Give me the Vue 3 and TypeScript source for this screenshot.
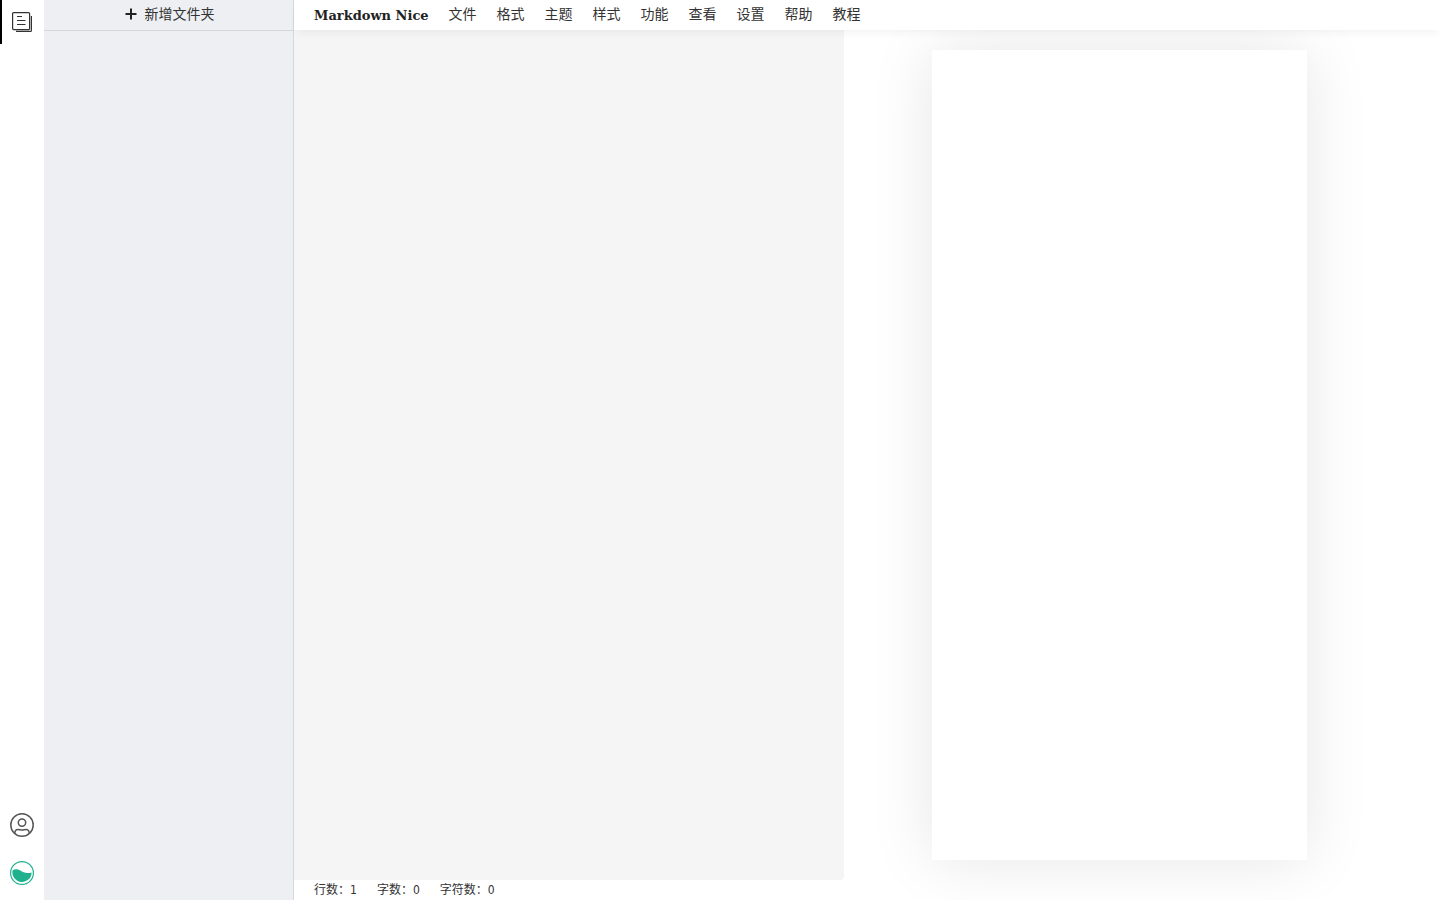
<script setup lang="ts">
import { computed, ref } from 'vue'

const menus: string[] = ['文件', '格式', '主题', '样式', '功能', '查看', '设置', '帮助', '教程']
const content = ref<string>('')

const stats = computed(() => [
  { label: '行数', value: content.value.split('\n').length },
  { label: '字数', value: content.value.replace(/\s/g, '').length },
  { label: '字符数', value: content.value.length },
])
</script>

<template>
  <div class="app">
    <nav class="rail" aria-label="侧边栏">
      <button class="rail-btn active" type="button" aria-label="文章">
        <svg width="20" height="20" viewBox="0 0 20 20" fill="none" stroke="#333" stroke-width="1.200">
          <rect x=".6" y=".6" width="17" height="17" rx="1" />
          <path d="M19.400 4v14.400a1 1 0 0 1-1 1H4M5 4.500h5M5 8.500h8.500M5 12.500h8.500" />
        </svg>
      </button>
      <div class="rail-bottom">
        <button class="rail-btn" type="button" aria-label="用户">
          <svg width="24" height="24" viewBox="0 0 24 24" fill="none" stroke="#555" stroke-width="1.500">
            <circle cx="12" cy="12" r="11.200" />
            <circle cx="12" cy="9.600" r="3.700" />
            <path d="M4.800 20.400c0-2.700 1.200-4 3.200-4 1.500 0 2.300.6 4 .6s2.500-.6 4-.6c2 0 3.200 1.300 3.200 4" />
          </svg>
        </button>
        <button class="rail-btn" type="button" aria-label="主页">
          <svg width="24" height="24" viewBox="0 0 24 24">
            <circle cx="12" cy="12" r="11.400" fill="#fff" stroke="#20b08e" stroke-width="1.200" />
            <path d="M2.700 9c2.800-1 5.200-.8 7.700.5 2.800 1.700 5.500 3.200 11.200 1.900a9.600 9.600 0 1 1-18.900-2.400z" fill="#20b08e" />
          </svg>
        </button>
      </div>
    </nav>

    <aside class="folders">
      <button class="add-folder" type="button">
        <svg width="12" height="12" viewBox="0 0 12 12" stroke="#222" stroke-width="2" aria-hidden="true">
          <path d="M6 .5v11M.5 6h11" />
        </svg>
        <span>新增文件夹</span>
      </button>
    </aside>

    <main class="workspace">
      <header class="topbar">
        <h1 class="brand">Markdown Nice</h1>
        <button v-for="menu in menus" :key="menu" class="menu" type="button">{{ menu }}</button>
      </header>
      <div class="panes">
        <section class="editor">
          <textarea v-model="content" class="input" aria-label="Markdown" spellcheck="false"></textarea>
          <footer class="status">
            <span v-for="s in stats" :key="s.label">{{ s.label }}：{{ s.value }}</span>
          </footer>
        </section>
        <section class="preview">
          <article class="page"></article>
        </section>
      </div>
    </main>
  </div>
</template>

<style>
body {
  margin: 0;
  overflow: hidden;
}
</style>

<style scoped>
.app {
  display: flex;
  height: 100vh;
  background: #fff;
  color: #333;
  font-family: "Liberation Sans", "Noto Sans CJK SC", sans-serif;
  font-size: 14px;
}
button {
  margin: 0;
  padding: 0;
  border: 0;
  background: none;
  color: inherit;
  font: inherit;
  cursor: pointer;
}
.rail {
  display: flex;
  flex: 0 0 44px;
  flex-direction: column;
  justify-content: space-between;
}
.rail-btn {
  display: flex;
  align-items: center;
  justify-content: center;
  width: 44px;
  height: 44px;
}
.rail-btn.active {
  box-shadow: inset 2px 0 #000;
}
.rail-bottom {
  display: flex;
  flex-direction: column;
  gap: 4px;
  padding-bottom: 5px;
}
.folders {
  box-sizing: border-box;
  flex: 0 0 250px;
  border-right: 1px solid #d6d9dc;
  background: #edeff3;
}
.add-folder {
  display: flex;
  align-items: center;
  justify-content: center;
  gap: 8px;
  box-sizing: border-box;
  width: 100%;
  height: 31px;
  padding: 0 0 2px 2px;
  border-bottom: 1px solid #d3d7da;
}
.add-folder span,
.menu {
  line-height: 20px;
}
.workspace {
  display: flex;
  flex: 1;
  flex-direction: column;
  min-width: 0;
}
.topbar {
  display: flex;
  position: relative;
  z-index: 1;
  align-items: center;
  gap: 20px;
  box-sizing: border-box;
  height: 30px;
  padding: 0 20px 2px;
  background: #fff;
  box-shadow: 0 4px 10px -2px rgba(0, 0, 0, 0.06);
}
.brand {
  margin: 0;
  padding-top: 4px;
  color: #222;
  font-family: "DejaVu Serif", serif;
  font-size: 13px;
  font-weight: 700;
  line-height: 20px;
  white-space: nowrap;
}
.menu {
  white-space: nowrap;
}
.panes {
  display: flex;
  flex: 1;
  min-height: 0;
}
.editor {
  display: flex;
  flex: 0 0 48%;
  flex-direction: column;
}
.input {
  flex: 1;
  box-sizing: border-box;
  width: 100%;
  padding: 20px;
  border: 0;
  border-radius: 0 0 4px 0;
  outline: 0;
  background: #f5f5f5;
  font: inherit;
  resize: none;
}
.status {
  display: flex;
  gap: 20px;
  padding: 0 20px;
  font-family: "DejaVu Sans Condensed", "Noto Sans CJK SC", sans-serif;
  font-size: 12px;
  line-height: 20px;
}
.preview {
  display: flex;
  flex: 0 0 48%;
  justify-content: center;
  box-sizing: border-box;
  padding: 20px 0 40px;
}
.page {
  width: 375px;
  background: #fff;
  box-shadow: 0 0 60px rgba(0, 0, 0, 0.1);
}
</style>
